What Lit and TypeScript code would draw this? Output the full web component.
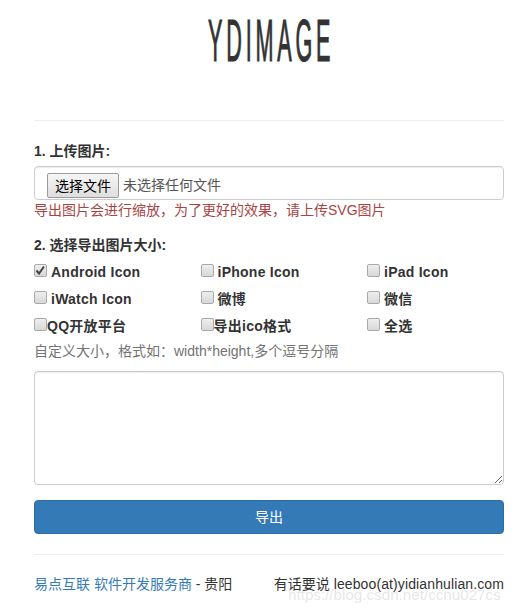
import { LitElement, html, css, svg } from "lit";
import { customElement } from "lit/decorators.js";

const SIZES = [
  { label: "Android Icon", checked: true, tight: false },
  { label: "iPhone Icon", checked: false, tight: false },
  { label: "iPad Icon", checked: false, tight: false },
  { label: "iWatch Icon", checked: false, tight: false },
  { label: "微博", checked: false, tight: false },
  { label: "微信", checked: false, tight: false },
  { label: "QQ开放平台", checked: false, tight: true },
  { label: "导出ico格式", checked: false, tight: true },
  { label: "全选", checked: false, tight: false },
];

const checkMark = svg`<path d="M2.5 6.5 L5 9.5 L10 2.5" fill="none" stroke="#444" stroke-width="2"/>`;

@customElement("app-root")
export class AppRoot extends LitElement {
  static styles = css`
    :host {
      display: block;
      box-sizing: border-box;
      height: 612px;
      padding: 0 15px 0 34px;
      position: relative;
      overflow: hidden;
      background: #fff;
      color: #333;
      font-family: "Liberation Sans", "Noto Sans CJK SC", sans-serif;
      font-size: 14px;
      line-height: 20px;
    }

    .logo {
      height: 120px;
      display: flex;
      justify-content: center;
      padding-left: 5px;
    }

    .logo span {
      display: block;
      height: 60px;
      margin-top: 11px;
      font-size: 60px;
      line-height: 60px;
      color: #333;
      letter-spacing: 10.5px;
      white-space: nowrap;
      -webkit-text-stroke: 1.2px #333;
      transform: scaleX(0.36);
    }

    hr {
      border: 0;
      border-top: 1px solid #eee;
      margin: 0;
    }

    .field-label {
      font-weight: 700;
      height: 20px;
    }

    .first-label {
      margin-top: 20px;
    }

    .file-box {
      box-sizing: border-box;
      height: 34px;
      margin-top: 5px;
      padding: 6px 12px;
      display: flex;
      align-items: flex-start;
      border: 1px solid #ccc;
      border-radius: 4px;
      box-shadow: inset 0 1px 1px rgba(0, 0, 0, 0.075);
    }

    .file-btn {
      box-sizing: border-box;
      flex: none;
      height: 25px;
      width: 72px;
      font: inherit;
      color: #000;
      padding: 0;
      border: 1px solid #9a9a9a;
      border-radius: 2px;
      background: linear-gradient(#f6f6f6, #dedede);
    }

    .file-name {
      margin-left: 4px;
      line-height: 25px;
      color: #555;
    }

    .error {
      color: #a94442;
      height: 20px;
    }

    .second-label {
      margin-top: 15px;
    }

    .sizes {
      display: grid;
      grid-template-columns: repeat(3, 166.5px);
      grid-auto-rows: 27px;
      margin-top: 3px;
    }

    .size {
      display: flex;
      align-items: center;
      font-weight: 700;
      letter-spacing: 0.25px;
    }

    .box {
      box-sizing: border-box;
      flex: none;
      width: 13px;
      height: 13px;
      margin-right: 4px;
      margin-top: -3px;
      border: 1px solid #a9a9a9;
      border-radius: 2px;
      background: linear-gradient(#eee, #d8d8d8);
    }

    .box svg {
      display: block;
      margin: -1px;
    }

    .size.tight .box {
      margin-right: 0;
    }

    .help {
      margin-top: 2px;
      height: 20px;
      color: #737373;
    }

    textarea {
      display: block;
      box-sizing: border-box;
      width: 470px;
      height: 114px;
      margin: 10px 0 0;
      padding: 6px 12px;
      border: 1px solid #ccc;
      border-radius: 4px;
      box-shadow: inset 0 1px 1px rgba(0, 0, 0, 0.075);
      font: inherit;
    }

    .export {
      display: block;
      box-sizing: border-box;
      width: 100%;
      height: 34px;
      margin-top: 15px;
      border: 1px solid #2e6da4;
      border-radius: 4px;
      background: #337ab7;
      color: #fff;
      font: inherit;
    }

    .rule-bottom {
      margin-top: 20px;
    }

    footer {
      display: flex;
      justify-content: space-between;
      margin-top: 19px;
    }

    a {
      color: #337ab7;
      text-decoration: none;
    }

    .mail {
      letter-spacing: 0.115px;
    }

    .watermark {
      position: absolute;
      left: 288px;
      top: 583px;
      font-size: 15.2px;
      line-height: 24px;
      color: rgba(170, 170, 170, 0.3);
      white-space: nowrap;
    }
  `;

  render() {
    return html`
      <div class="logo"><span>YDIMAGE</span></div>
      <hr />
      <div class="field-label first-label">1. 上传图片:</div>
      <div class="file-box">
        <button class="file-btn">选择文件</button>
        <span class="file-name">未选择任何文件</span>
      </div>
      <div class="error">导出图片会进行缩放，为了更好的效果，请上传SVG图片</div>
      <div class="field-label second-label">2. 选择导出图片大小:</div>
      <div class="sizes">
        ${SIZES.map(
          (s) => html`
            <label class="size ${s.tight ? "tight" : ""}">
              <span class="box">
                ${s.checked
                  ? html`<svg width="13" height="13" viewBox="0 0 13 13">${checkMark}</svg>`
                  : ""}
              </span>
              ${s.label}
            </label>
          `
        )}
      </div>
      <div class="help">自定义大小，格式如：width*height,多个逗号分隔</div>
      <textarea></textarea>
      <button class="export">导出</button>
      <hr class="rule-bottom" />
      <footer>
        <span><a href="#">易点互联 软件开发服务商</a> - 贵阳</span>
        <span>有话要说 <span class="mail">leeboo(at)yidianhulian.com</span></span>
      </footer>
      <div class="watermark">https://blog.csdn.net/ccnu027cs</div>
    `;
  }
}
